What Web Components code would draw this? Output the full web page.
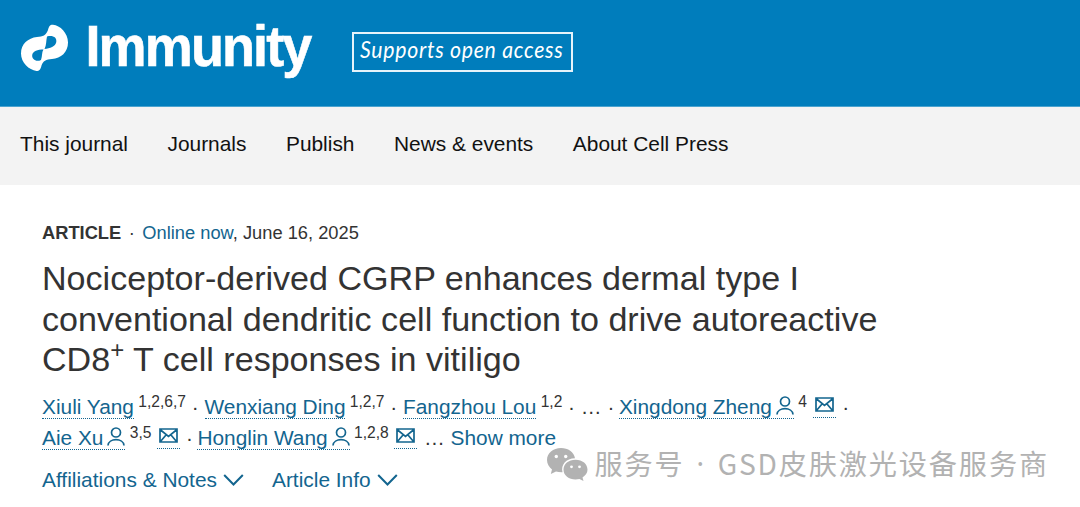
<!DOCTYPE html>
<html lang="en">
<head>
<meta charset="utf-8">
<title>Immunity</title>
<style>
	html, body {
		margin: 0;
		height: 100%;
		background: #fff;
		overflow: hidden;
	}
</style>
</head>
<body>
<journal-page>
	<journal-header slot="header"></journal-header>
	<journal-nav slot="nav">
		<nav-item>This journal</nav-item>
		<nav-item>Journals</nav-item>
		<nav-item>Publish</nav-item>
		<nav-item>News &amp; events</nav-item>
		<nav-item>About Cell Press</nav-item>
	</journal-nav>
	<article-meta kind="ARTICLE" date="June 16, 2025">Online now</article-meta>
	<article-title>Nociceptor-derived CGRP enhances dermal type I<br>conventional dendritic cell function to drive autoreactive<br>CD8<sup>+</sup> T cell responses in vitiligo</article-title>
	<author-list>
		<author-row><author-name refs="1,2,6,7">Xiuli Yang</author-name> · <author-name refs="1,2,7">Wenxiang Ding</author-name> · <author-name refs="1,2">Fangzhou Lou</author-name> · … · <author-name refs="4" contact tight>Xingdong Zheng</author-name> ·</author-row>
		<author-row><author-name refs="3,5" contact>Aie Xu</author-name> · <author-name refs="1,2,8" contact tight>Honglin Wang</author-name> … <text-link>Show more</text-link></author-row>
	</author-list>
	<article-toggles>
		<toggle-link>Affiliations &amp; Notes</toggle-link>
		<toggle-link>Article Info</toggle-link>
	</article-toggles>
	<account-mark slot="mark" kind="服务号" prefix="GSD">皮肤激光设备服务商</account-mark>
</journal-page>

<script>
(function() {
	/**
	 * Base class: renders the styles and markup of the component in an open shadow root
	*/
	class BaseElement extends HTMLElement {
		constructor() {
			super();
			this.rendered = false;
		}

		connectedCallback() {
			if (!this.rendered) {
				const shadow = this.attachShadow({mode: 'open'});
				shadow.innerHTML = `<style>${this.getStyles()}</style>${this.getMarkup()}`;
				this.rendered = true;
			}
		}

		getStyles() {
			return ':host { display: block; }';
		}

		getMarkup() {
			return '<slot></slot>';
		}
	}

	class JournalPage extends BaseElement {
		getStyles() {
			return `
			:host {
				--link: #13658f;
				--text: #333;
				--brand: #007dbc;
				display: flex;
				flex-direction: column;
				position: relative;
				height: 507px;
				background: #fff;
				color: var(--text);
				font-family: "Liberation Sans", Arial, sans-serif;
				font-size: 20.85px;
			}
			main {
				padding: 36px 42px 0;
			}`;
		}

		getMarkup() {
			return `<slot name="header"></slot>
				<slot name="nav"></slot>
				<main><slot></slot></main>
				<slot name="mark"></slot>`;
		}
	}

	class JournalHeader extends BaseElement {
		getStyles() {
			return `
			:host {
				display: flex;
				align-items: flex-start;
				box-sizing: border-box;
				height: 107px;
				padding: 24px 0 0 21px;
				background: var(--brand);
				border-bottom: 1px solid #4aa3cf;
				color: #fff;
			}
			svg {
				display: block;
				overflow: visible;
				fill: currentColor;
			}
			.wordmark {
				margin-left: 20px;
				font: bold 57.2px "Liberation Sans", Arial, sans-serif;
				letter-spacing: -2px;
				stroke: currentColor;
				stroke-width: .6;
			}
			.badge {
				box-sizing: border-box;
				width: 221px;
				height: 40px;
				margin: 8px 0 0 40px;
				border: 2px solid #e6f3fa;
				font: italic 24px Lato, "Open Sans", sans-serif;
				letter-spacing: .8px;
			}`;
		}

		getMarkup() {
			return `<svg class="logo" width="48" height="48" viewBox="0 0 48 48">
					<path fill-rule="evenodd" d="M32 .7C39 1.2 47 9 47 18.500C47 28 40 34.500 31 35C25 35.500 22 37 20.500 41.500C19.500 45.500 18.500 47 15.500 47C8 46 0 38.500 0 29.500C0 20 7 14 16 13C22 12.500 25 11.500 27 6C28 2 29 .5 32 .7ZM26 12.500C25 17 25.500 21 23.500 25C29 24.500 34.500 22.500 35.300 18C36 13.500 32 11 26 12.500ZM22.500 25.500C16.500 25.500 12 27 11.200 31C10.700 35 15 38.500 20 36C21.500 32 20.500 28.500 22.500 25.500Z"/>
				</svg>
				<svg class="wordmark" width="223" height="56">
					<text x="-3.500" y="41.500" textLength="225" lengthAdjust="spacingAndGlyphs">Immunity</text>
				</svg>
				<div class="badge"><svg width="217" height="36">
					<text x="6" y="23.500" textLength="203.500" lengthAdjust="spacingAndGlyphs">Supports open access</text>
				</svg></div>`;
		}
	}

	class JournalNav extends BaseElement {
		getStyles() {
			return `
			:host {
				display: flex;
				gap: 39.500px;
				box-sizing: border-box;
				height: 78px;
				padding: 25px 20px 0;
				background: #f3f3f3;
				color: #111;
				font-size: 20.900px;
				line-height: 24px;
			}`;
		}
	}

	class NavItem extends BaseElement {
		getStyles() {
			return ':host { display: block; white-space: nowrap; }';
		}
	}

	class ArticleMeta extends BaseElement {
		getStyles() {
			return `
			:host {
				display: block;
				font-size: 18.300px;
				line-height: 24px;
				white-space: pre;
			}
			.dot {
				margin: 0 7.500px;
			}
			.link {
				color: var(--link);
			}`;
		}

		getMarkup() {
			return `<b>${this.getAttribute('kind')}</b><span class="dot">·</span><span class="link"><slot></slot></span>, ${this.getAttribute('date')}`;
		}
	}

	class ArticleTitle extends BaseElement {
		getStyles() {
			return `
			:host {
				display: block;
				margin-top: 13px;
				font-size: 34.100px;
				line-height: 40.600px;
				white-space: nowrap;
			}
			::slotted(sup) {
				font-size: 24px;
				line-height: 0;
				vertical-align: 13px;
			}`;
		}
	}

	class AuthorList extends BaseElement {
		getStyles() {
			return ':host { display: block; margin-top: 11px; }';
		}
	}

	class AuthorRow extends BaseElement {
		getStyles() {
			return ':host { display: block; height: 31.500px; line-height: 31.500px; white-space: nowrap; }';
		}
	}

	/**
	 * Author link with its affiliation numbers. "contact" adds the person and mail icons
	*/
	class AuthorName extends BaseElement {
		getStyles() {
			return `
			:host {
				display: inline;
			}
			:host([tight]) {
				margin: 0 .700px 0 -1.300px;
			}
			.name, .mail {
				display: inline-block;
				line-height: 23px;
				color: var(--link);
				border-bottom: 1px dotted var(--link);
			}
			sup {
				font-size: 15.600px;
				line-height: 0;
				vertical-align: 7px;
			}
			svg {
				fill: none;
				stroke: currentColor;
				stroke-width: 1.700;
			}
			.person {
				margin-left: 4px;
				vertical-align: -1px;
			}
			.mail {
				height: 22px;
				padding: 0 2px;
				line-height: 0;
				vertical-align: -4px;
			}
			.mail svg {
				display: block;
				margin-top: 2px;
			}`;
		}

		getMarkup() {
			const contact = this.hasAttribute('contact');
			const person = contact ? `<svg class="person" width="18" height="19" viewBox="0 0 18 19">
				<circle cx="9" cy="5.500" r="4.500"/><path d="M1 18.500C1.500 10.700 16.500 10.700 17 18.500"/></svg>` : '';
			const mail = contact ? ` <span class="mail"><svg width="19" height="15" viewBox="0 0 19 15">
				<path d="M1 1H18V14H1ZM1 1.500L9.500 8.500L18 1.500M1.500 13.500L7 7M17.500 13.500L12 7"/></svg></span>` : '';
			return `<span class="name"><slot></slot>${person}</span><sup> ${this.getAttribute('refs')}</sup>${mail}`;
		}
	}

	class TextLink extends BaseElement {
		getStyles() {
			return ':host { display: inline; color: var(--link); }';
		}
	}

	class ArticleToggles extends BaseElement {
		getStyles() {
			return ':host { display: flex; gap: 28px; margin-top: 14px; font-size: 20.900px; line-height: 24px; color: var(--link); }';
		}
	}

	class ToggleLink extends BaseElement {
		getStyles() {
			return `
			:host {
				display: flex;
				align-items: center;
				gap: 6px;
				white-space: nowrap;
			}
			svg {
				fill: none;
				stroke: currentColor;
				stroke-width: 2;
			}`;
		}

		getMarkup() {
			return `<slot></slot><svg width="21" height="12" viewBox="0 0 21 12"><path d="M1.200 1L10.500 10.500L19.800 1"/></svg>`;
		}
	}

	/**
	 * Account mark which lies over the lower right corner of the page
	*/
	class AccountMark extends BaseElement {
		getStyles() {
			return `
			:host {
				display: flex;
				align-items: center;
				position: absolute;
				left: 546px;
				top: 443px;
				height: 40px;
				color: #b2b2b2;
				font: 28.200px/40px "Noto Sans CJK SC", sans-serif;
				letter-spacing: 1.850px;
				white-space: nowrap;
			}
			svg {
				display: block;
				margin: 2px 6.500px 0 0;
				overflow: visible;
				fill: currentColor;
			}
			.dot {
				width: 33px;
				font-family: "Noto Sans", sans-serif;
				text-align: center;
			}
			.prefix {
				width: 61px;
			}`;
		}

		getMarkup() {
			return `<svg width="42" height="34" viewBox="0 0 42 34">
					<path d="M15 1C7 1 1 6 1 13C1 17 3 20 6 22.500L4.800 27L10 24.500C12 25 14 25.300 16.500 25.200C14.500 18 20 11.500 29 11.300C28 5 22 1 15 1Z"/>
					<path d="M29.500 12.800C22.500 12.800 17.500 17 17.500 22.800C17.500 28.500 23 32.500 29.500 32.500L33.500 32L37.500 34L36.500 30.500C39.500 28.500 41.500 26 41.500 22.800C41.500 17 36.500 12.800 29.500 12.800Z"/>
					<g fill="#fff"><circle cx="10.300" cy="9.500" r="1.700"/><circle cx="19.700" cy="9.500" r="1.700"/><circle cx="25.500" cy="19.800" r="1.400"/><circle cx="33.500" cy="19.800" r="1.400"/></g>
				</svg>
				<span>${this.getAttribute('kind')}</span><span class="dot">·</span><span class="prefix">${this.getAttribute('prefix')}</span><slot></slot>`;
		}
	}

	/**
	 * Register all the components
	*/
	function defineElements() {
		customElements.define("journal-page", JournalPage);
		customElements.define("journal-header", JournalHeader);
		customElements.define("journal-nav", JournalNav);
		customElements.define("nav-item", NavItem);
		customElements.define("article-meta", ArticleMeta);
		customElements.define("article-title", ArticleTitle);
		customElements.define("author-list", AuthorList);
		customElements.define("author-row", AuthorRow);
		customElements.define("author-name", AuthorName);
		customElements.define("text-link", TextLink);
		customElements.define("article-toggles", ArticleToggles);
		customElements.define("toggle-link", ToggleLink);
		customElements.define("account-mark", AccountMark);
	}

	defineElements();
})();
</script>
</body>
</html>
